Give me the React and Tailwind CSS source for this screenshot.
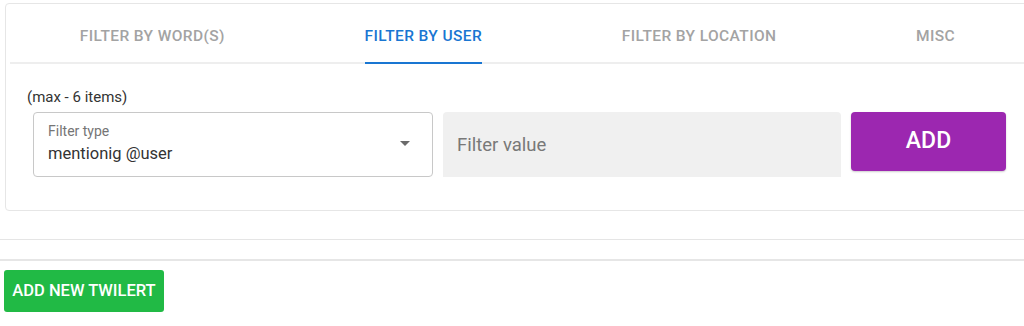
import React, { useState } from 'react';

const tabs = ['Filter by word(s)', 'Filter by user', 'Filter by location', 'Misc'];

const App = () => {
  const [active, setActive] = useState(1);
  const [filterValue, setFilterValue] = useState('');

  return (
    <div className="w-[1024px] h-[326px] overflow-hidden bg-white font-['Roboto','Liberation_Sans',sans-serif]">
      {/* Filter card */}
      <div className="ml-[5px] mt-[3px] w-[1030px] h-[208px] border border-[#e6e6e6] rounded-[4px] px-[4px]">
        {/* Tabs */}
        <div className="flex h-[60px] w-[1015px] border-b-2 border-[#eeeeee]">
          {tabs.map((tab, idx) => (
            <button
              key={tab}
              onClick={() => setActive(idx)}
              className="flex-auto flex justify-center"
            >
              <span
                className={
                  idx === active
                    ? 'flex items-center h-[60px] pt-[8px] border-b-2 border-[#1976d2] text-[#1976d2] text-[15.5px] font-medium uppercase tracking-[0.4px]'
                    : 'flex items-center h-[60px] pt-[8px] border-b-2 border-transparent text-[#a3a3a3] text-[15.5px] font-medium uppercase tracking-[0.4px]'
                }
              >
                {tab}
              </span>
            </button>
          ))}
        </div>

        {/* Filter form */}
        <div className="pl-[17px]">
          <p className="mt-[24px] h-[18px] leading-[18px] text-[15px] text-[#333333]">(max - 6 items)</p>
          <div className="flex items-start gap-[10px] mt-[6px] ml-[6px]">
            <div className="w-[400px] h-[65px] border border-[#c8c8c8] rounded-[4px] flex items-center justify-between pl-[14px] pr-[22px]">
              <div>
                <div className="text-[14px] leading-[18px] text-[#757575] mt-[-2px]">Filter type</div>
                <div className="text-[16.5px] leading-[22px] text-[#333333] mt-[3px]">mentionig @user</div>
              </div>
              <svg width="10" height="5" viewBox="0 0 10 5" className="mt-[-2px]">
                <path d="M0 0 L10 0 L5 5 Z" fill="#6b6b6b" />
              </svg>
            </div>
            <input
              value={filterValue}
              onChange={(e) => setFilterValue(e.target.value)}
              placeholder="Filter value"
              className="w-[398px] h-[65px] bg-[#f0f0f0] rounded-t-[4px] px-[14px] text-[18.5px] text-[#333333] placeholder:text-[#787878] outline-none"
            />
            <button className="w-[155px] h-[59px] bg-[#9c27b0] rounded-[4px] text-white text-[23px] font-medium shadow-[0_1px_2px_rgba(0,0,0,0.2)]">
              ADD
            </button>
          </div>
        </div>
      </div>

      {/* Separators */}
      <div className="mt-[28px] h-px bg-[#e5e5e5]" />
      <div className="mt-[19px] h-[2px] bg-[#e6e6e6]" />

      {/* Bottom action */}
      <div className="pl-[4px] pt-[9px]">
        <button className="w-[160px] h-[42px] bg-[#21ba45] rounded-[3px] text-white text-[16.5px] font-medium">
          ADD NEW TWILERT
        </button>
      </div>
    </div>
  );
};

export default App;
